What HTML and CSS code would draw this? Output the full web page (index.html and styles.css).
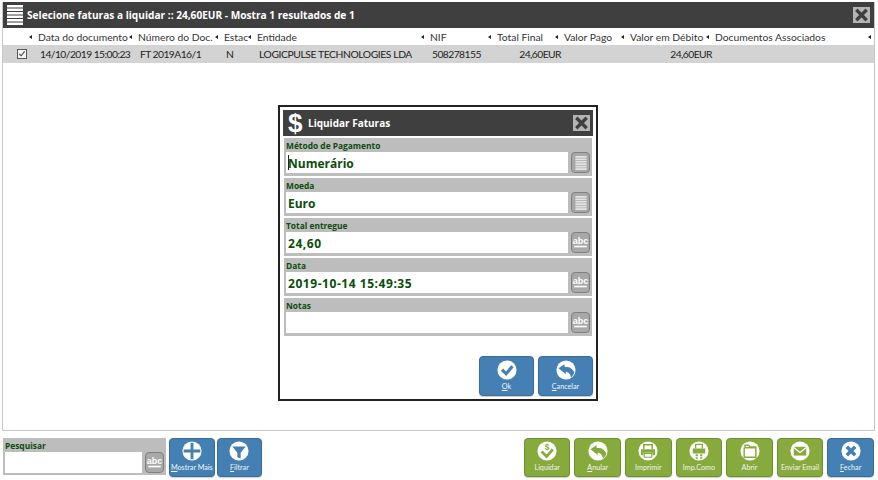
FILE: index.html
```html
<!DOCTYPE html>
<html lang="pt">
<head>
  <meta charset="UTF-8">
  <title>Selecione faturas a liquidar</title>
  <link rel="stylesheet" href="styles.css">
</head>
<body>
  <svg class="sprites" width="0" height="0">
    <defs>
      <symbol id="i-lines" viewBox="0 0 16 20">
        <path d="M0 0h16v2.400H0zM0 3.500h16v2.400H0zM0 7h16v2.400H0zM0 10.500h16v2.400H0zM0 14h16v2.400H0zM0 17.500h16v2.400H0z" fill="currentColor"/>
      </symbol>
      <symbol id="i-x" viewBox="0 0 20 20">
        <path d="M3.500 3.500l13 13M16.500 3.500l-13 13" stroke="currentColor" stroke-width="4.200" fill="none"/>
      </symbol>
      <symbol id="i-check" viewBox="0 0 24 24">
        <circle cx="12" cy="12" r="11.500" fill="#fff"/>
        <path d="M6 11.500l5 5 7.500-9" stroke="currentColor" stroke-width="3.800" fill="none"/>
      </symbol>
      <symbol id="i-undo" viewBox="0 0 24 24">
        <circle cx="12" cy="12" r="11.500" fill="#fff"/>
        <path d="M3 10l7-5 .5 3.500c5-1 9.500 1 11.500 6.500-1 3-2.500 5-4 6-.5-4-3-7-6.500-7l.5 3z" fill="currentColor"/>
      </symbol>
      <symbol id="i-plus" viewBox="0 0 24 24">
        <circle cx="12" cy="12" r="11.500" fill="#fff"/>
        <path d="M12 2v20M2 12h20" stroke="currentColor" stroke-width="3.400"/>
      </symbol>
      <symbol id="i-filter" viewBox="0 0 24 24">
        <circle cx="12" cy="12" r="11.500" fill="#fff"/>
        <path d="M4 6.500h16l-6 7.500v7l-4-1.500V14z" fill="currentColor"/>
      </symbol>
      <symbol id="i-pay" viewBox="0 0 24 24">
        <circle cx="12" cy="12" r="11.500" fill="#fff"/>
        <path d="M5.500 12.500l6 6L19 10" stroke="currentColor" stroke-width="3.400" fill="none"/>
        <text x="12" y="11" font-size="10" font-weight="700" text-anchor="middle" fill="currentColor" font-family="Liberation Sans, sans-serif">$</text>
      </symbol>
      <symbol id="i-print" viewBox="0 0 24 24">
        <circle cx="12" cy="12" r="11.500" fill="#fff"/>
        <path d="M7 10V4.500h10V10" stroke="currentColor" stroke-width="1.800" fill="none"/>
        <path d="M3.500 10h17v7h-3v-3h-11v3h-3z" fill="currentColor"/>
        <path d="M7.500 15h9v4.500h-9z" stroke="currentColor" stroke-width="1.400" fill="none"/>
      </symbol>
      <symbol id="i-printas" viewBox="0 0 24 24">
        <circle cx="12" cy="12" r="11.500" fill="#fff"/>
        <path d="M8 9V4h8v5" stroke="currentColor" stroke-width="1.600" fill="none"/>
        <path d="M4.500 9h15v6h-15z" fill="currentColor"/>
        <path d="M8 16h2.600v2.400H8zM13.400 16H16v2.400h-2.600zM8 19.400h2.600v1.800H8zM13.400 19.400H16v1.800h-2.600z" fill="currentColor"/>
      </symbol>
      <symbol id="i-open" viewBox="0 0 24 24">
        <circle cx="12" cy="12" r="11.500" fill="#fff"/>
        <path d="M5 8V19.500h14V7h-7L10.500 5H6v3h13" stroke="currentColor" stroke-width="1.700" fill="none"/>
      </symbol>
      <symbol id="i-mail" viewBox="0 0 24 24">
        <circle cx="12" cy="12" r="11.500" fill="#fff"/>
        <path d="M4.500 7h15v10.500h-15z" fill="currentColor"/>
        <path d="M4.500 7.800l7.500 6 7.500-6" stroke="#fff" stroke-width="1.500" fill="none"/>
      </symbol>
      <symbol id="i-close" viewBox="0 0 24 24">
        <circle cx="12" cy="12" r="11.500" fill="#fff"/>
        <path d="M7 7l10 10M17 7L7 17" stroke="currentColor" stroke-width="4.200"/>
      </symbol>
      <symbol id="i-abc" viewBox="0 0 19 21">
        <text x="9.500" y="12" font-size="10" font-weight="700" text-anchor="middle" fill="#fff" font-family="Liberation Sans, sans-serif">abc</text>
        <path d="M2.500 15h14" stroke="#fff" stroke-width="1.800"/>
      </symbol>
      <symbol id="i-tick" viewBox="0 0 9 9">
        <path d="M1.500 4.500l2 2 4-5" stroke="#444" stroke-width="1.200" fill="none"/>
      </symbol>
    </defs>
  </svg>

  <div class="window">
    <div class="titlebar">
      <svg class="title-icon"><use href="#i-lines"/></svg>
      <span class="title-text">Selecione faturas a liquidar :: 24,60EUR - Mostra 1 resultados de 1</span>
      <span class="close-box"><svg><use href="#i-x"/></svg></span>
    </div>

    <div class="grid">
      <div class="grid-row grid-head">
        <div class="cell"><span></span><i class="sort"></i></div>
        <div class="cell"><span>Data do documento</span><i class="sort"></i></div>
        <div class="cell"><span>Número do Doc.</span><i class="sort"></i></div>
        <div class="cell"><span>Estac</span><i class="sort"></i></div>
        <div class="cell"><span>Entidade</span><i class="sort"></i></div>
        <div class="cell"><span>NIF</span><i class="sort"></i></div>
        <div class="cell"><span>Total Final</span><i class="sort"></i></div>
        <div class="cell"><span>Valor Pago</span><i class="sort"></i></div>
        <div class="cell"><span>Valor em Débito</span><i class="sort"></i></div>
        <div class="cell"><span>Documentos Associados</span><i class="sort"></i></div>
      </div>
      <div class="grid-row grid-line">
        <div class="cell"><span class="checkbox"><svg><use href="#i-tick"/></svg></span></div>
        <div class="cell">14/10/2019 15:00:23</div>
        <div class="cell">FT 2019A16/1</div>
        <div class="cell">N</div>
        <div class="cell caps">LOGICPULSE TECHNOLOGIES LDA</div>
        <div class="cell">508278155</div>
        <div class="cell num">24,60EUR</div>
        <div class="cell"></div>
        <div class="cell num">24,60EUR</div>
        <div class="cell"></div>
      </div>
    </div>

    <div class="dialog">
      <div class="dialog-bar">
        <span class="dollar">$</span>
        <span class="dialog-title">Liquidar Faturas</span>
        <span class="close-box"><svg><use href="#i-x"/></svg></span>
      </div>
      <div class="fields">
        <div class="field">
          <label>Método de Pagamento</label>
          <div class="field-line">
            <div class="input"><span class="caret"></span>Numerário</div>
            <span class="side-btn"><svg class="list-icon"><use href="#i-lines"/></svg></span>
          </div>
        </div>
        <div class="field">
          <label>Moeda</label>
          <div class="field-line">
            <div class="input">Euro</div>
            <span class="side-btn"><svg class="list-icon"><use href="#i-lines"/></svg></span>
          </div>
        </div>
        <div class="field">
          <label>Total entregue</label>
          <div class="field-line">
            <div class="input digits">24,60</div>
            <span class="side-btn"><svg><use href="#i-abc"/></svg></span>
          </div>
        </div>
        <div class="field">
          <label>Data</label>
          <div class="field-line">
            <div class="input digits">2019-10-14 15:49:35</div>
            <span class="side-btn"><svg><use href="#i-abc"/></svg></span>
          </div>
        </div>
        <div class="field">
          <label>Notas</label>
          <div class="field-line">
            <div class="input"></div>
            <span class="side-btn"><svg><use href="#i-abc"/></svg></span>
          </div>
        </div>
      </div>
      <div class="dialog-actions">
        <button class="btn blue big"><svg><use href="#i-check"/></svg><span><u>O</u>k</span></button>
        <button class="btn blue big"><svg><use href="#i-undo"/></svg><span><u>C</u>ancelar</span></button>
      </div>
    </div>
  </div>

  <div class="footer">
    <div class="search-group">
      <div class="field search">
        <label>Pesquisar</label>
        <div class="field-line">
          <div class="input"></div>
          <span class="side-btn"><svg><use href="#i-abc"/></svg></span>
        </div>
      </div>
      <button class="btn blue"><svg><use href="#i-plus"/></svg><span><u>M</u>ostrar Mais</span></button>
      <button class="btn blue"><svg><use href="#i-filter"/></svg><span><u>F</u>iltrar</span></button>
    </div>
    <div class="action-group">
      <button class="btn green"><svg><use href="#i-pay"/></svg><span>Liquidar</span></button>
      <button class="btn green"><svg><use href="#i-undo"/></svg><span><u>A</u>nular</span></button>
      <button class="btn green"><svg><use href="#i-print"/></svg><span>Imprimir</span></button>
      <button class="btn green"><svg><use href="#i-printas"/></svg><span>Imp.Como</span></button>
      <button class="btn green"><svg><use href="#i-open"/></svg><span>Abrir</span></button>
      <button class="btn green"><svg><use href="#i-mail"/></svg><span>Enviar Email</span></button>
      <button class="btn blue"><svg><use href="#i-close"/></svg><span><u>F</u>echar</span></button>
    </div>
  </div>
</body>
</html>
```

FILE: styles.css
```css
/* Pagina */
html, body {
  margin: 0;
  height: 100%;
}

body {
  background-color: #ffffff;
  font-family: "Open Sans", "Noto Sans", sans-serif;
  color: #222222;
  padding: 2px 3px 0 2px;
  box-sizing: border-box;
  overflow: hidden;
}

.sprites {
  position: absolute;
}

/* Janela principal */
.window {
  position: relative;
  height: 429px;
  border: 1px solid #c8c8c8;
  border-top: none;
  box-sizing: border-box;
}

.titlebar {
  display: flex;
  align-items: center;
  height: 26px;
  background-color: #3f3f3f;
  color: #ffffff;
  padding: 0 4px;
}

.title-icon {
  width: 16px;
  height: 20px;
  color: #ffffff;
}

.title-text {
  margin-left: 4px;
  flex: 1;
  font-size: 10.15px;
  font-weight: 700;
}

.close-box {
  width: 17px;
  height: 16px;
  background-color: #b4b4b4;
  color: #3f3f3f;
  display: block;
}

.close-box svg {
  display: block;
  width: 17px;
  height: 16px;
}

/* Tabela */
.grid-row {
  display: grid;
  grid-template-columns: 32px 100px 86px 33px 173px 67px 67px 66px 85px 1fr;
  font-family: "Lato", sans-serif;
  font-size: 10.3px;
}

.grid-head {
  height: 17px;
  color: #333333;
}

.grid-head .cell {
  display: flex;
  justify-content: space-between;
  align-items: center;
  padding: 0 3px;
  white-space: nowrap;
  overflow: hidden;
}

.sort {
  width: 0;
  height: 0;
  border-top: 2.5px solid transparent;
  border-bottom: 2.5px solid transparent;
  border-right: 3px solid #222222;
  flex: none;
}

.grid-line {
  height: 18px;
  align-items: center;
  background-color: #d3d3d3;
  letter-spacing: -0.55px;
}

.grid-line .cell {
  padding-left: 5px;
  white-space: nowrap;
}

.grid-line .num {
  text-align: right;
}

.grid-line .caps {
  letter-spacing: -0.4px;
}

.checkbox {
  display: block;
  width: 8px;
  height: 8px;
  margin-left: 9px;
  border: 1px solid #555555;
  background-color: #f4f4f4;
}

.checkbox svg {
  display: block;
  width: 8px;
  height: 8px;
}

/* Dialogo */
.dialog {
  position: absolute;
  left: 275px;
  top: 103px;
  width: 320px;
  height: 296px;
  box-sizing: border-box;
  border: 2px solid #222222;
  background-color: #ffffff;
  padding: 3px;
  display: flex;
  flex-direction: column;
}

.dialog-bar {
  display: flex;
  align-items: center;
  height: 26px;
  background-color: #3f3f3f;
  color: #ffffff;
  padding: 0 3px 0 5px;
}

.dollar {
  font-family: "Liberation Sans", sans-serif;
  font-weight: 700;
  font-size: 26px;
  width: 16px;
}

.dialog-title {
  flex: 1;
  margin-left: 4px;
  font-size: 10px;
  font-weight: 700;
}

.fields {
  display: flex;
  flex-direction: column;
  gap: 2px;
  padding: 2px 1px 0;
}

/* Campos */
.field {
  background-color: #bdbdbd;
  height: 38px;
  padding: 0 2px;
  box-sizing: border-box;
}

.field label {
  display: block;
  height: 14px;
  line-height: 15px;
  font-size: 8.4px;
  font-weight: 700;
  color: #0b4d0b;
}

.field-line {
  display: flex;
  align-items: center;
  gap: 3px;
}

.input {
  flex: 1;
  height: 21px;
  line-height: 23px;
  background-color: #ffffff;
  padding-left: 2px;
  font-size: 12px;
  font-weight: 700;
  color: #0b4d0b;
  position: relative;
}

.input.digits {
  letter-spacing: 0.55px;
}

.caret {
  position: absolute;
  left: 2px;
  top: 3px;
  width: 1px;
  height: 15px;
  background-color: #222222;
}

.side-btn {
  width: 17px;
  height: 19px;
  border: 1px solid #808080;
  border-radius: 4px;
  background-color: #a8a8a8;
  color: #e4e4e4;
  display: flex;
  align-items: center;
  justify-content: center;
  flex: none;
}

.side-btn svg {
  display: block;
  width: 17px;
  height: 19px;
}

.side-btn .list-icon {
  width: 12px;
  height: 14px;
}

.dialog-actions {
  margin-top: auto;
  display: flex;
  justify-content: flex-end;
  gap: 4px;
}

/* Botoes */
.btn {
  width: 46.6px;
  height: 39px;
  padding: 2px 0 0;
  border: 1px solid #3a6a96;
  border-radius: 4px;
  box-shadow: 0 1px 1px rgba(0, 0, 0, 0.2);
  color: #f0f4f8;
  font-family: "Lato", sans-serif;
  font-size: 7.2px;
  display: flex;
  flex-direction: column;
  align-items: center;
  gap: 2px;
}

.btn svg {
  flex: none;
  width: 20px;
  height: 20px;
}

.btn span {
  white-space: nowrap;
}

.btn.big {
  width: 55px;
  height: 40px;
  padding-top: 3px;
}

.blue {
  background-color: #4580b5;
}

.btn.blue svg {
  color: #4580b5;
}

.green {
  background-color: #87aa3c;
  border-color: #6f8f2e;
}

.btn.green svg {
  color: #87aa3c;
}

/* Rodape */
.footer {
  display: flex;
  justify-content: space-between;
  align-items: flex-end;
  padding: 7px 1px 0 0;
}

.search-group {
  display: flex;
  gap: 2px;
  margin-left: 1px;
}

.search-group .btn {
  width: 45.6px;
}

.action-group {
  display: flex;
  gap: 4px;
}

.search {
  width: 163px;
  height: 37px;
  margin-right: 1px;
}
```
